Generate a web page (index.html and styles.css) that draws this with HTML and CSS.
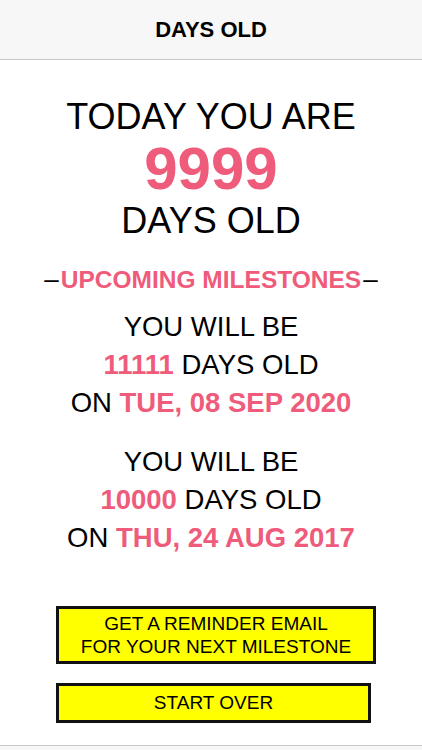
FILE: index.html
```html
<!DOCTYPE html>
<html lang="en">
<head>
<meta charset="utf-8">
<title>Days Old</title>
<link rel="stylesheet" href="styles.css">
</head>
<body>
<header class="nav">
  <h1 class="nav-title">DAYS OLD</h1>
</header>
<main class="content">
  <p class="big">TODAY YOU ARE</p>
  <p class="count">9999</p>
  <p class="big">DAYS OLD</p>
  <h2 class="section"><span class="dash">–</span>UPCOMING MILESTONES<span class="dash">–</span></h2>
  <div class="milestone">
    <p>YOU WILL BE</p>
    <p><b class="pink">11111</b> DAYS OLD</p>
    <p>ON <b class="pink">TUE, 08 SEP 2020</b></p>
  </div>
  <div class="milestone second">
    <p>YOU WILL BE</p>
    <p><b class="pink">10000</b> DAYS OLD</p>
    <p>ON <b class="pink">THU, 24 AUG 2017</b></p>
  </div>
  <div class="actions">
    <button class="btn btn-remind">GET A REMINDER EMAIL<br>FOR YOUR NEXT MILESTONE</button>
    <button class="btn btn-start">START OVER</button>
  </div>
</main>
<footer class="bottom"></footer>
</body>
</html>
```
FILE: styles.css
```css
* { box-sizing: border-box; }
html, body { margin: 0; padding: 0; }
body {
  height: 750px;
  display: flex;
  flex-direction: column;
  background: #fff;
  color: #000;
  font-family: "Liberation Sans", Arial, Helvetica, sans-serif;
}
p, h1, h2 { margin: 0; }
.nav {
  height: 60px;
  background: #f7f7f8;
  border-bottom: 1px solid #c9c9cc;
  display: flex;
  align-items: center;
  justify-content: center;
}
.nav-title {
  font-size: 22px;
  font-weight: bold;
  line-height: 24px;
  padding-top: 1px;
}
.content {
  flex: 1;
  display: flex;
  flex-direction: column;
  text-align: center;
  padding-top: 36px;
}
.big {
  font-size: 36px;
  line-height: 42px;
}
.count {
  font-size: 60px;
  line-height: 62px;
  font-weight: bold;
  color: #ef5b7b;
}
.section {
  margin-top: 22px;
  font-size: 24.5px;
  line-height: 30px;
  font-weight: bold;
  color: #ef5b7b;
}
.dash {
  color: #000;
  font-weight: normal;
  font-size: 26px;
  padding: 0 2px 0 0;
}
.dash:last-child { padding: 0 0 0 2px; }
.milestone {
  margin-top: 13px;
  font-size: 27.5px;
  line-height: 38px;
}
.milestone.second { margin-top: 21px; }
.pink { color: #ef5b7b; }
.actions {
  margin-top: 49px;
  display: flex;
  flex-direction: column;
  align-items: flex-start;
  gap: 19px;
  padding-left: 56px;
}
.btn {
  font-family: "Liberation Sans", Arial, Helvetica, sans-serif;
  font-size: 19px;
  line-height: 23px;
  color: #000;
  background: #ffff00;
  border: 3px solid #111;
  border-radius: 0;
  text-align: center;
  cursor: pointer;
}
.btn-remind { width: 320px; padding: 3px 0; }
.btn-start { width: 315px; padding: 5px 0 6px; }
.bottom {
  height: 5px;
  background: #f7f7f8;
  border-top: 1px solid #c9c9cc;
}
```
